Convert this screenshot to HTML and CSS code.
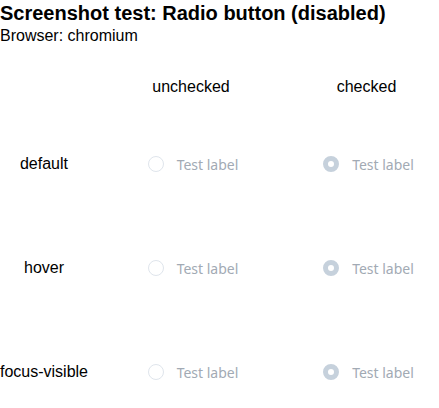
FILE: index.html
```html
<!DOCTYPE html>
<html>
<head>
<meta charset="utf-8">
<link rel="stylesheet" href="styles.css">
</head>
<body>
<h1 class="title">Screenshot test: Radio button (disabled)</h1>
<p class="sub">Browser: chromium</p>
<div class="grid">
  <div class="hdr"></div>
  <div class="hdr">unchecked</div>
  <div class="hdr">checked</div>

  <div class="rowlabel">default</div>
  <div class="cell"><span class="radio"></span><span class="lbl">Test label</span></div>
  <div class="cell"><span class="radio on"></span><span class="lbl">Test label</span></div>

  <div class="rowlabel">hover</div>
  <div class="cell"><span class="radio"></span><span class="lbl">Test label</span></div>
  <div class="cell"><span class="radio on"></span><span class="lbl">Test label</span></div>

  <div class="rowlabel">focus-visible</div>
  <div class="cell"><span class="radio"></span><span class="lbl">Test label</span></div>
  <div class="cell"><span class="radio on"></span><span class="lbl">Test label</span></div>
</div>
</body>
</html>
```
FILE: styles.css
```css
body {
  margin: 0;
  font-family: "Liberation Sans", Arial, sans-serif;
  color: #000;
  background: #fff;
}
.title {
  margin: 0;
  padding-top: 2px;
  font-size: 20px;
  line-height: 23px;
  font-weight: bold;
}
.sub {
  margin: 0;
  padding-top: 2px;
  font-size: 16px;
  line-height: 18px;
}
.grid {
  display: grid;
  grid-template-columns: 88px 206px 145px;
  grid-template-rows: 67px 104px 104px 104px;
}
.hdr {
  display: flex;
  align-items: flex-start;
  justify-content: center;
  padding-top: 33px;
  font-size: 16px;
  line-height: 18px;
}
.rowlabel {
  display: flex;
  align-items: center;
  justify-content: center;
  font-size: 16px;
  white-space: nowrap;
}
.cell {
  display: flex;
  align-items: center;
  justify-content: center;
  gap: 13px;
  padding-left: 4px;
}
.radio {
  width: 16px;
  height: 16px;
  box-sizing: border-box;
  border-radius: 50%;
  border: 1px solid #dfe5ec;
  background: #fff;
  flex: none;
}
.radio.on {
  border: 5px solid #c6d1dc;
}
.lbl {
  font-family: "Noto Sans", sans-serif;
  font-size: 14px;
  color: #a2aab4;
}
```
